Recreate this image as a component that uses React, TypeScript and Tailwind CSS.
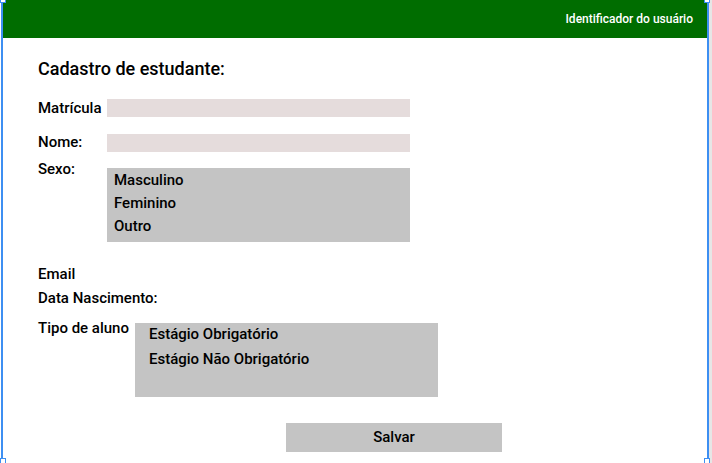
export default function App() {
  const label = "text-[15px] leading-[18px] font-medium text-black";
  return (
    <div
      className="relative w-[712px] h-[463px] flex bg-white overflow-hidden"
      style={{ fontFamily: "Roboto, 'Liberation Sans', sans-serif" }}
    >
      <div className="w-px h-full bg-white" />
      <div className="w-[708px] h-full border-l-2 border-r-2 border-[#3d8ff2] flex flex-col">
        <div className="h-[38px] bg-[#006d00] flex items-center justify-end pr-[14px]">
          <span className="text-[12px] font-medium text-white leading-[14px]">
            Identificador do usuário
          </span>
        </div>
        <div className="flex flex-col pl-[35px]">
          <div className="mt-[19px] text-[18px] leading-[24px] font-medium text-black">
            Cadastro de estudante:
          </div>
          <div className="mt-[18px] flex items-start">
            <div className={`${label} w-[69px]`}>Matrícula</div>
            <div className="w-[303px] h-[18px] bg-[#e5dcdc]" />
          </div>
          <div className="mt-[16px] flex items-start">
            <div className={`${label} w-[69px]`}>Nome:</div>
            <div className="mt-px w-[303px] h-[18px] bg-[#e5dcdc]" />
          </div>
          <div className="mt-[8px] flex items-start">
            <div className={`${label} w-[69px]`}>Sexo:</div>
            <div className="mt-[8px] w-[303px] h-[74px] bg-[#c4c4c4] pt-[1px] pl-[7px] flex flex-col">
              <div className="text-[15px] leading-[23px] font-medium text-black">Masculino</div>
              <div className="text-[15px] leading-[23px] font-medium text-black">Feminino</div>
              <div className="text-[15px] leading-[23px] font-medium text-black">Outro</div>
            </div>
          </div>
          <div className={`mt-[23px] ${label}`}>Email</div>
          <div className={`mt-[6px] ${label}`}>Data Nascimento:</div>
          <div className="mt-[12px] flex items-start">
            <div className={`${label} w-[97px]`}>Tipo de aluno</div>
            <div className="mt-[4px] w-[303px] h-[74px] bg-[#c4c4c4] pl-[14px] flex flex-col">
              <div className="-mt-px text-[15px] leading-[25px] font-medium text-black">Estágio Obrigatório</div>
              <div className="text-[15px] leading-[25px] font-medium text-black">Estágio Não Obrigatório</div>
            </div>
          </div>
          <div className="mt-[26px] ml-[248px] w-[216px] h-[29px] bg-[#c4c4c4] flex items-center justify-center pb-[2px]">
            <span className="text-[15px] leading-[18px] font-medium text-black">Salvar</span>
          </div>
        </div>
      </div>
      <div className="flex-1 h-full bg-[#e6e6e6]" />
      <span className="absolute left-0 top-[-3px] w-[6px] h-[6px] bg-white border border-[#3d8ff2]" />
      <span className="absolute left-[704px] top-[-3px] w-[6px] h-[6px] bg-white border border-[#3d8ff2]" />
      <span className="absolute left-0 top-[458px] w-[6px] h-[6px] bg-white border border-[#3d8ff2]" />
      <span className="absolute left-[704px] top-[458px] w-[6px] h-[6px] bg-white border border-[#3d8ff2]" />
    </div>
  );
}
